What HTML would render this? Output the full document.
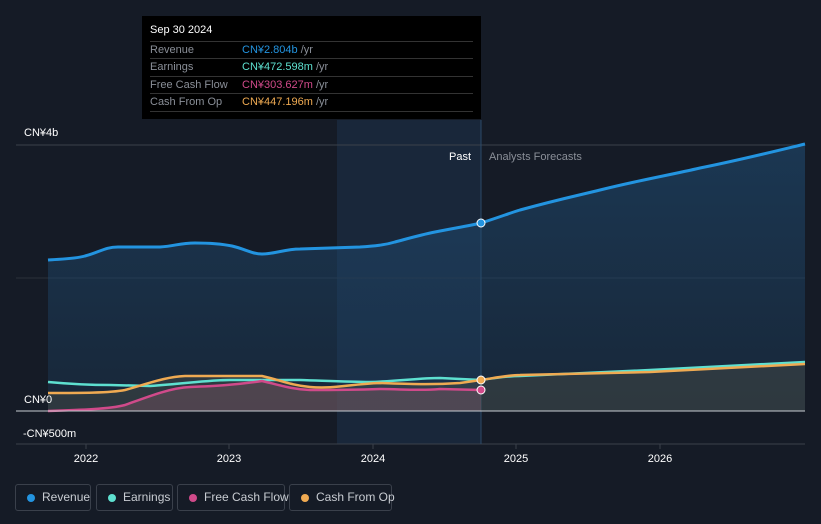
<!DOCTYPE html>
<html><head><meta charset="utf-8"><style>
body{margin:0;background:#151b26;font-family:"Liberation Sans",sans-serif;}
.wrap{position:relative;width:821px;height:524px;overflow:hidden;background:#151b26}
.tip{position:absolute;left:142px;top:16px;width:339px;height:103px;background:#000;color:#fff;font-size:11px}
.tip .h{position:absolute;left:8px;top:8px;font-size:11px}
.tip .r{position:absolute;left:8px;width:323px;height:17px;border-top:1px solid #333;line-height:17px;color:#8a8f98}
.tip .r span{position:absolute;left:92px}
.leg{position:absolute;top:484px;height:27px;border:1px solid #3a404b;border-radius:3px;color:#c8ccd2;font-size:12px;line-height:25px;box-sizing:border-box;padding-left:26px;white-space:nowrap}
.leg i{position:absolute;left:11px;top:9px;width:8px;height:8px;border-radius:50%}
</style></head><body><div class="wrap">
<svg width="821" height="524" style="position:absolute;left:0;top:0">
<defs><linearGradient id="g" x1="0" y1="0" x2="0" y2="1"><stop offset="0" stop-color="#1f4a70" stop-opacity=".6"/><stop offset="1" stop-color="#1f4a70" stop-opacity=".25"/></linearGradient></defs>
<rect x="337" y="120" width="144" height="324" fill="#1a2b40" opacity=".8"/>
<line x1="16" y1="145" x2="805" y2="145" stroke="#3a404b"/>
<line x1="16" y1="278" x2="805" y2="278" stroke="#2a303b"/>
<line x1="16" y1="444" x2="805" y2="444" stroke="#3a404b"/>
<line x1="481" y1="120" x2="481" y2="444" stroke="#2c4a68"/>
<path d="M48,260 C60,259 75,259 85,256 C100,252 105,247 118,247 L160,247 C175,246 180,243 195,243 C210,243 222,244 232,246 C245,249 252,254 262,254 C275,254 285,249 300,249 L360,247 C375,246 385,245 395,242 C410,238 420,235 435,232 C455,228 468,226 481,223 C500,217 510,213 520,210 C560,199 580,195 600,190 C640,180 670,175 700,168 C740,160 780,150 805,144 L805,411 L48,411 Z" fill="url(#g)"/>
<path d="M48,393 C80,393 110,393 125,390 C150,383 165,377 185,376 L262,376 C280,380 290,385 310,387 C335,389 350,384 380,383 C410,384 430,385 460,383 L481,380 C500,377 510,375 520,375 L650,372 L805,364 L805,411 L48,411Z" fill="#5a5a4a" opacity=".35"/>
<path d="M48,411 C80,410 110,409 125,405 C150,396 170,388 190,387 C215,386 235,385 262,381 C280,385 290,389 310,390 C330,390 350,390 380,389 C400,389 420,391 440,389 L481,390 L481,411Z" fill="#8a5a6a" opacity=".35"/>
<path d="M48,260 C60,259 75,259 85,256 C100,252 105,247 118,247 L160,247 C175,246 180,243 195,243 C210,243 222,244 232,246 C245,249 252,254 262,254 C275,254 285,249 300,249 L360,247 C375,246 385,245 395,242 C410,238 420,235 435,232 C455,228 468,226 481,223 C500,217 510,213 520,210 C560,199 580,195 600,190 C640,180 670,175 700,168 C740,160 780,150 805,144" fill="none" stroke="#2394e0" stroke-width="3"/>
<path d="M48,382 C70,384 90,385 110,385 L150,386 C190,383 210,380 230,380 L300,380 C330,381 350,382 370,382 C400,381 420,378 440,378 L481,380 C500,377 510,376 520,376 L650,370 L805,362" fill="none" stroke="#5ee0d0" stroke-width="2.5"/>
<path d="M48,411 C80,410 110,409 125,405 C150,396 170,388 190,387 C215,386 235,385 262,381 C280,385 290,389 310,390 C330,390 350,390 380,389 C400,389 420,391 440,389 L481,390" fill="none" stroke="#d04a8a" stroke-width="2.5"/>
<path d="M48,393 C80,393 110,393 125,390 C150,383 165,377 185,376 L262,376 C280,380 290,385 310,387 C335,389 350,384 380,383 C410,384 430,385 460,383 L481,380 C500,377 510,375 520,375 L650,372 L805,364" fill="none" stroke="#efaa52" stroke-width="2.5"/>
<line x1="16" y1="411" x2="805" y2="411" stroke="#c8ccd2" stroke-width="1"/>
<circle cx="481" cy="223" r="4" fill="#2394e0" stroke="#fff" stroke-width="1"/>
<circle cx="481" cy="380" r="4" fill="#efaa52" stroke="#fff" stroke-width="1"/>
<circle cx="481" cy="390" r="4" fill="#d04a8a" stroke="#fff" stroke-width="1"/>
<g font-size="11" fill="#fff">
<text x="24" y="136">CN¥4b</text><text x="24" y="403">CN¥0</text><text x="23" y="437">-CN¥500m</text>
<text x="449" y="160">Past</text><text x="489" y="160" fill="#8a8f98">Analysts Forecasts</text>
<text x="86" y="462" text-anchor="middle">2022</text><text x="229" y="462" text-anchor="middle">2023</text><text x="373" y="462" text-anchor="middle">2024</text><text x="516" y="462" text-anchor="middle">2025</text><text x="660" y="462" text-anchor="middle">2026</text>
</g>
<g stroke="#3a404b"><line x1="86" y1="444" x2="86" y2="449"/><line x1="229" y1="444" x2="229" y2="449"/><line x1="373" y1="444" x2="373" y2="449"/><line x1="516" y1="444" x2="516" y2="449"/><line x1="660" y1="444" x2="660" y2="449"/></g>
</svg>
<div class="tip"><div class="h">Sep 30 2024</div>
<div class="r" style="top:25px">Revenue<span style="color:#2394e0">CN¥2.804b <b style="color:#8a8f98;font-weight:normal">/yr</b></span></div>
<div class="r" style="top:42px">Earnings<span style="color:#5ee0d0">CN¥472.598m <b style="color:#8a8f98;font-weight:normal">/yr</b></span></div>
<div class="r" style="top:60px">Free Cash Flow<span style="color:#d04a8a">CN¥303.627m <b style="color:#8a8f98;font-weight:normal">/yr</b></span></div>
<div class="r" style="top:77px;border-bottom:1px solid #333">Cash From Op<span style="color:#efaa52">CN¥447.196m <b style="color:#8a8f98;font-weight:normal">/yr</b></span></div>
</div>
<div class="leg" style="left:15px;width:76px"><i style="background:#2394e0"></i>Revenue</div>
<div class="leg" style="left:96px;width:77px"><i style="background:#5ee0d0"></i>Earnings</div>
<div class="leg" style="left:177px;width:108px"><i style="background:#d04a8a"></i>Free Cash Flow</div>
<div class="leg" style="left:289px;width:103px"><i style="background:#efaa52"></i>Cash From Op</div>
</div></body></html>
